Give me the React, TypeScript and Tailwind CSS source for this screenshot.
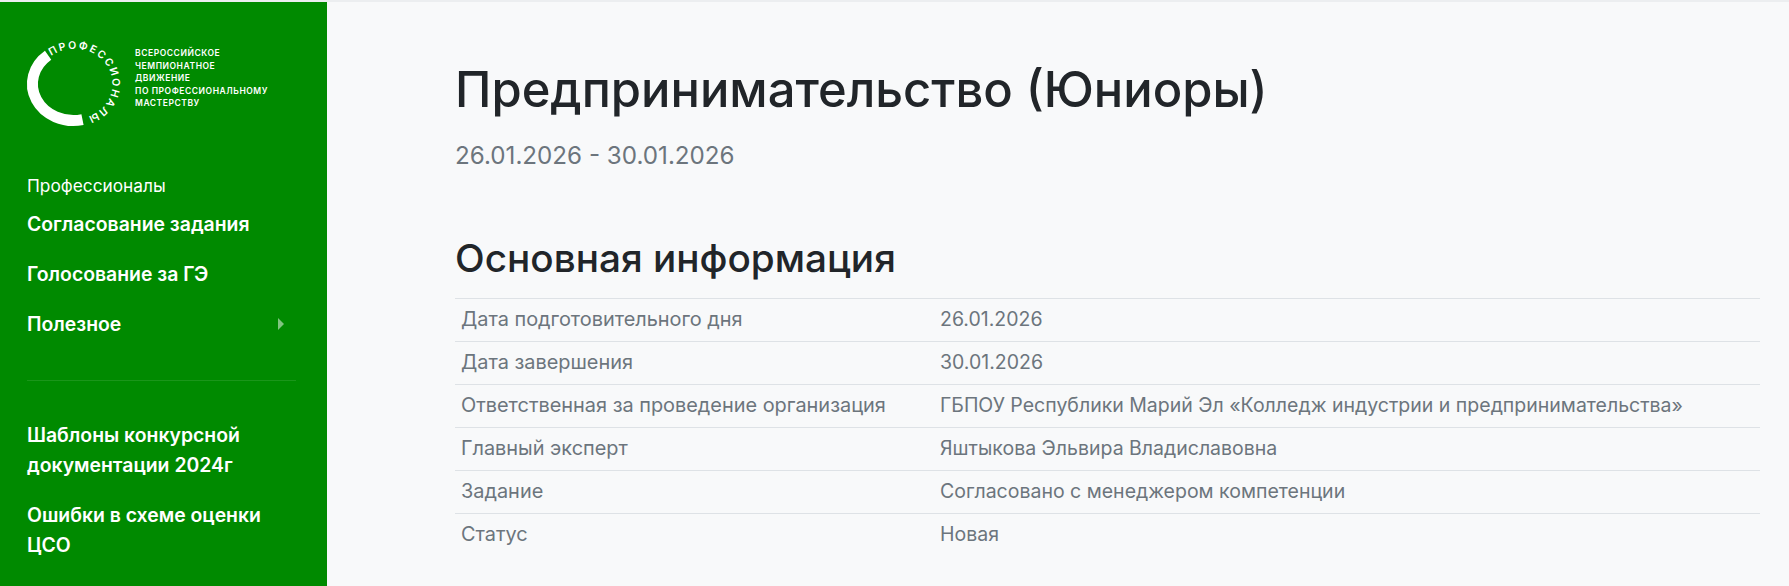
const rows = [
  ['Дата подготовительного дня', '26.01.2026'],
  ['Дата завершения', '30.01.2026'],
  ['Ответственная за проведение организация', 'ГБПОУ Республики Марий Эл «Колледж индустрии и предпринимательства»'],
  ['Главный эксперт', 'Яштыкова Эльвира Владиславовна'],
  ['Задание', 'Согласовано с менеджером компетенции'],
  ['Статус', 'Новая'],
];

function Logo() {
  return (
    <svg width="100" height="100" viewBox="0 0 100 100" className="shrink-0 overflow-visible">
      <defs>
        <path id="logo-ring" d="M 24.2 22 A 38 35 1 1 1 58.4 83.3" fill="none" />
      </defs>
      <path d="M 21.1 21.3 A 41 36.5 0 0 0 55.5 85.6" fill="none" stroke="#fff" strokeWidth="11" />
      <text fontSize="10.5" fontWeight="600" fill="#fff" letterSpacing="1.9" className="font-['Inter',sans-serif]">
        <textPath href="#logo-ring">ПРОФЕССИОНАЛЫ</textPath>
      </text>
    </svg>
  );
}

function NavLink({ children, arrow }: { children: React.ReactNode; arrow?: boolean }) {
  return (
    <a className="flex items-center justify-between text-white font-semibold text-[19.4px] leading-[30px] py-[10px]">
      <span>{children}</span>
      {arrow && <span className="w-0 h-0 border-y-[6px] border-y-transparent border-l-[6px] border-l-white/50 mr-[12px]" />}
    </a>
  );
}

export default function App() {
  return (
    <div className="h-[586px] overflow-hidden bg-[#f8f9fa] flex font-['Inter',sans-serif] border-t-2 border-[#eceef0]">
      <aside className="w-[327px] shrink-0 bg-[#008a00] pl-[27px] pr-[31px] pt-[32px]">
        <div className="flex items-start gap-[8px]">
          <Logo />
          <div className="pt-[13px] text-white text-[8.5px] leading-[12.5px] font-semibold tracking-[0.55px]">
            <div>ВСЕРОССИЙСКОЕ</div>
            <div>ЧЕМПИОНАТНОЕ</div>
            <div>ДВИЖЕНИЕ</div>
            <div>ПО ПРОФЕССИОНАЛЬНОМУ</div>
            <div>МАСТЕРСТВУ</div>
          </div>
        </div>
        <div className="mt-[40px] text-white text-[17.3px] leading-[24px]">Профессионалы</div>
        <nav className="mt-[1px]">
          <NavLink>Согласование задания</NavLink>
          <NavLink>Голосование за ГЭ</NavLink>
          <NavLink arrow>Полезное</NavLink>
        </nav>
        <div className="mt-[31px] mb-[29px] border-t border-white/10" />
        <NavLink>Шаблоны конкурсной документации 2024г</NavLink>
        <NavLink>Ошибки в схеме оценки ЦСО</NavLink>
      </aside>
      <main className="flex-1 pl-[128px] pr-[29px]">
        <h1 className="mt-[58px] text-[48.9px] leading-[60px] font-medium text-[#212529]">Предпринимательство (Юниоры)</h1>
        <p className="mt-[18px] text-[24.2px] leading-[36px] text-[#6c757d]">26.01.2026 - 30.01.2026</p>
        <h2 className="mt-[60px] text-[38.7px] leading-[48px] font-medium text-[#212529]">Основная информация</h2>
        <table className="mt-[16px] w-full text-[#6c757d]">
          <tbody>
            {rows.map(([label, value]) => (
              <tr key={label} className="border-t border-[#dee2e6] h-[43px]">
                <td className="pl-[6px] pb-[1px] w-[485px] text-[19.9px] leading-[29px]">{label}</td>
                <td className="pb-[1px] text-[19.5px] leading-[29px]">{value}</td>
              </tr>
            ))}
          </tbody>
        </table>
      </main>
    </div>
  );
}
